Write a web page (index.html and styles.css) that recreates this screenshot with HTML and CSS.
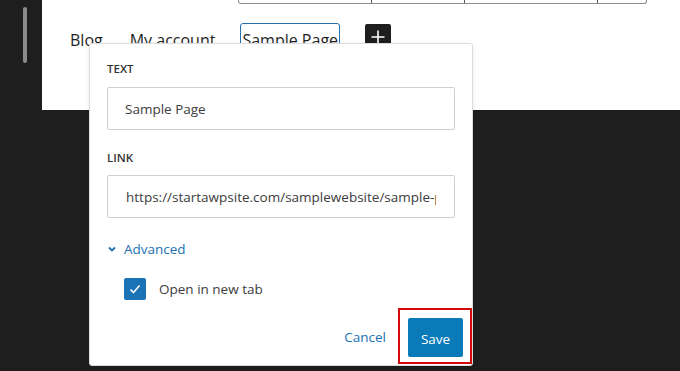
FILE: index.html
```html
<!DOCTYPE html>
<html lang="en">
<head>
    <meta charset="UTF-8">
    <meta name="viewport" content="width=device-width, initial-scale=1.0">
    <title>Navigation link settings</title>
    <link rel="stylesheet" href="styles.css">
</head>
<body>
    <div class="editor">
        <div class="scroll-rail">
            <div class="scroll-thumb"></div>
        </div>

        <div class="canvas">
            <div class="block-toolbar">
                <span class="tool tool-a"></span>
                <span class="tool tool-b"></span>
                <span class="tool tool-c"></span>
                <span class="tool tool-d"></span>
            </div>

            <nav class="menu">
                <span class="menu-item item-blog">Blog</span>
                <span class="menu-item item-account">My account</span>
                <span class="menu-item is-selected">Sample Page</span>
                <button class="add-item" type="button">
                    <svg width="16" height="16" viewBox="0 0 16 16">
                        <path d="M8 1.5v13M1.5 8h13" stroke="#fff" stroke-width="1.6" fill="none"/>
                    </svg>
                </button>
            </nav>
        </div>
    </div>

    <!-- link settings popover, sits over the canvas -->
    <div class="popover">
        <label class="field-label">Text</label>
        <div class="field"><span class="field-value">Sample Page</span></div>

        <label class="field-label label-link">Link</label>
        <div class="field field-url"><span class="field-value">https://startawpsite.com/samplewebsite/sample-page/</span></div>

        <div class="advanced">
            <svg class="chevron" width="10" height="10" viewBox="0 0 10 10">
                <path d="M2 3.5l3 3 3-3" stroke="#2271b1" stroke-width="1.8" fill="none"/>
            </svg>
            <span>Advanced</span>
        </div>

        <div class="check-row">
            <span class="checkbox">
                <svg width="16" height="16" viewBox="0 0 16 16">
                    <path d="M3.5 8.5l3 3 6-7" stroke="#fff" stroke-width="1.6" fill="none"/>
                </svg>
            </span>
            <span>Open in new tab</span>
        </div>

        <div class="actions">
            <button class="btn-cancel" type="button">Cancel</button>
            <div class="highlight">
                <button class="btn-save" type="button">Save</button>
            </div>
        </div>
    </div>
</body>
</html>
```

FILE: styles.css
```css
body {
    margin: 0;
    width: 680px;
    height: 371px;
    background-color: #1e1e1e;
    font-family: "Open Sans", "Noto Sans", sans-serif;
    color: #1e1e1e;
    overflow: hidden;
    position: relative;
}

.editor {
    display: flex;
    align-items: flex-start;
}

.scroll-rail {
    width: 42px;
    padding-top: 7px;
}

.scroll-thumb {
    width: 4px;
    height: 56px;
    margin-left: 23px;
    border-radius: 2px;
    background-color: #8a8a8a;
}

.canvas {
    flex: 1;
    height: 110px;
    background-color: #fff;
}

.block-toolbar {
    display: flex;
    width: 409px;
    height: 4px;
    margin-left: 196px;
    border: 1px solid #8f8f8f;
    border-top: none;
    border-radius: 0 0 3px 3px;
    box-sizing: border-box;
}

.tool {
    height: 100%;
    border-right: 1px solid #555;
}

.tool-a { width: 132px; }
.tool-b { width: 92px; }
.tool-c { width: 132px; }
.tool-d { flex: 1; border-right: none; }

.menu {
    display: flex;
    align-items: flex-start;
    padding: 18px 0 0 28px;
    font-size: 16px;
}

.menu-item {
    padding-top: 5px;
    line-height: 26px;
    white-space: nowrap;
}

.item-blog { margin-right: 27px; }
.item-account { margin-right: 25px; }

.is-selected {
    padding: 3px 1px 0;
    border: 1.5px solid #2271b1;
    border-radius: 3px;
    margin-top: 1px;
}

.add-item {
    width: 26px;
    height: 26px;
    margin-left: 25px;
    margin-top: 2px;
    padding: 0;
    border: none;
    border-radius: 2px;
    background-color: #1e1e1e;
    display: flex;
    align-items: center;
    justify-content: center;
}

.popover {
    position: absolute;
    left: 89px;
    top: 43px;
    width: 384px;
    box-sizing: border-box;
    padding: 17px 17px 1px 17px;
    background-color: #fff;
    border: 1px solid #dcdcdc;
    border-radius: 3px;
    box-shadow: 0 2px 6px rgba(0, 0, 0, 0.08);
    font-size: 13.5px;
}

.field-label {
    display: block;
    font-size: 11.5px;
    font-weight: 600;
    line-height: 16px;
    text-transform: uppercase;
    color: #333;
}

.label-link {
    margin-top: 20px;
}

.field {
    margin-top: 10px;
    height: 43px;
    box-sizing: border-box;
    padding: 0 18px 0 17px;
    border: 1px solid #cfcfcf;
    border-radius: 2px;
    display: flex;
    align-items: center;
    color: #3c3c3c;
}

.field-value {
    flex: 1;
    min-width: 0;
    overflow: hidden;
    white-space: nowrap;
}

.field-url {
    margin-top: 9px;
    padding-left: 18px;
}

.advanced {
    display: flex;
    align-items: center;
    gap: 7px;
    height: 20px;
    margin-top: 21px;
    color: #2271b1;
}

.chevron {
    flex-shrink: 0;
}

.check-row {
    display: flex;
    align-items: center;
    gap: 13px;
    height: 22px;
    margin-top: 19px;
    padding-left: 17px;
    color: #3c3c3c;
}

.checkbox {
    width: 22px;
    height: 22px;
    border-radius: 2px;
    background-color: #1a73b5;
    display: flex;
    align-items: center;
    justify-content: center;
}

.actions {
    display: flex;
    justify-content: flex-end;
    align-items: center;
    margin-top: 8px;
    margin-right: -17px;
}

.btn-cancel {
    padding: 8px 12px 6px;
    border: none;
    background: none;
    font-family: inherit;
    font-size: 13.5px;
    color: #2271b1;
}

.highlight {
    border: 2px solid #d40a0a;
    padding: 8px 7px 5px 8px;
}

.btn-save {
    display: block;
    width: 55px;
    height: 39px;
    padding: 2px 0 0;
    border: none;
    border-radius: 2px;
    background-color: #0a7ab8;
    color: #fff;
    font-family: inherit;
    font-size: 13.5px;
}
```
